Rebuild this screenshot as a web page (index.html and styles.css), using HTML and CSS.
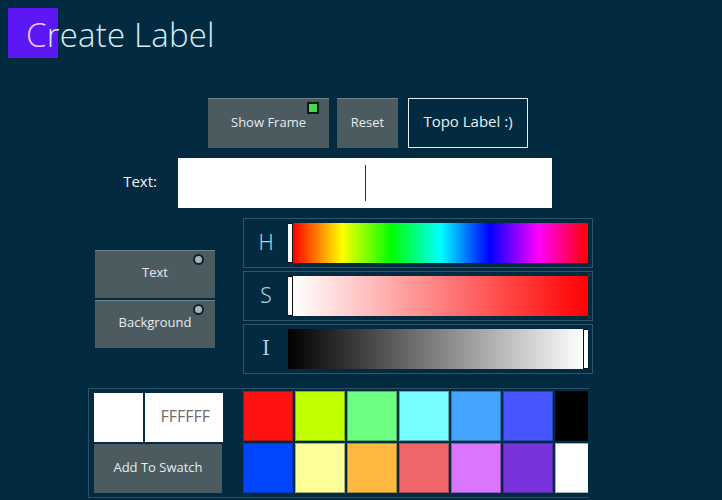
FILE: index.html
```html
<!DOCTYPE html>
<html>
<head>
<meta charset="utf-8">
<link rel="stylesheet" href="styles.css">
</head>
<body>
<div class="page">
  <header class="header">
    <div class="accent"></div>
    <h1 class="title"><span class="first">C</span>reate Label</h1>
  </header>

  <div class="toolbar">
    <button class="btn btn-frame">Show Frame<span class="led"></span></button>
    <button class="btn btn-reset">Reset</button>
    <div class="preview">Topo Label :)</div>
  </div>

  <div class="text-row">
    <label class="text-label">Text:</label>
    <div class="text-input"><span class="caret"></span></div>
  </div>

  <div class="color-area">
    <div class="targets">
      <button class="btn target">Text<span class="radio"></span></button>
      <button class="btn target">Background<span class="radio"></span></button>
    </div>
    <div class="sliders">
      <div class="slider">
        <span class="ch">H</span>
        <span class="thumb"></span>
        <div class="track hue"></div>
      </div>
      <div class="slider">
        <span class="ch">S</span>
        <span class="thumb"></span>
        <div class="track sat"></div>
      </div>
      <div class="slider">
        <span class="ch ch-i">I</span>
        <div class="track int"></div>
        <span class="thumb thumb-end"></span>
      </div>
    </div>
  </div>

  <div class="swatch-panel">
    <div class="current">
      <div class="current-top">
        <div class="current-chip"></div>
        <div class="hex">FFFFFF</div>
      </div>
      <button class="btn add">Add To Swatch</button>
    </div>
    <div class="swatches">
      <div class="sw" style="background:#ff1212"></div>
      <div class="sw" style="background:#c0ff00"></div>
      <div class="sw" style="background:#6cff82"></div>
      <div class="sw" style="background:#77ffff"></div>
      <div class="sw" style="background:#44a4ff"></div>
      <div class="sw" style="background:#4555ff"></div>
      <div class="sw" style="background:#000000"></div>
      <div class="sw" style="background:#0045ff"></div>
      <div class="sw" style="background:#ffff99"></div>
      <div class="sw" style="background:#ffb840"></div>
      <div class="sw" style="background:#ee6668"></div>
      <div class="sw" style="background:#dd74ff"></div>
      <div class="sw" style="background:#7833dd"></div>
      <div class="sw" style="background:#ffffff"></div>
    </div>
  </div>
</div>
</body>
</html>
```

FILE: styles.css
```css
* { box-sizing: border-box; }
html, body {
  margin: 0;
  padding: 0;
  background: #022b41;
  width: 722px;
  height: 500px;
  overflow: hidden;
  font-family: "Open Sans", "Noto Sans", sans-serif;
  color: #e4ecef;
}
.page {
  position: relative;
  width: 722px;
  height: 500px;
}
.header {
  position: relative;
  height: 98px;
}
.accent {
  position: absolute;
  left: 8px;
  top: 8px;
  width: 50px;
  height: 50px;
  background: #5b18f4;
}
.title {
  position: relative;
  margin: 0;
  padding: 10px 0 0 26px;
  font-weight: 300;
  font-size: 33px;
  line-height: 50px;
  color: #d8ecf4;
  letter-spacing: 0.2px;
}
.first { color: #eec8ff; }

.btn {
  position: relative;
  border: none;
  border-top: 1px solid #6f8388;
  background: #4b5b60;
  color: #e4ecef;
  font-family: "Open Sans", "Noto Sans", sans-serif;
  font-size: 13px;
  padding: 0 0 4px 0;
  margin: 0;
}
.toolbar {
  display: flex;
  height: 50px;
  margin-left: 208px;
}
.btn-frame { width: 121px; height: 50px; }
.btn-reset { width: 61px; height: 50px; margin-left: 8px; }
.led {
  position: absolute;
  right: 10px;
  top: 3px;
  width: 12px;
  height: 12px;
  background: #4ed64e;
  border: 2px solid #0b1a16;
}
.preview {
  margin-left: 10px;
  width: 120px;
  height: 50px;
  border: 1px solid #e8f0f2;
  display: flex;
  align-items: center;
  justify-content: center;
  font-size: 15px;
  color: #e8f0f2;
  padding-bottom: 4px;
}

.text-row {
  display: flex;
  align-items: center;
  margin-top: 10px;
  height: 50px;
}
.text-label {
  width: 157px;
  text-align: right;
  font-size: 15px;
  color: #eef3f5;
  padding-bottom: 4px;
}
.text-input {
  margin-left: 21px;
  width: 374px;
  height: 50px;
  background: #ffffff;
  display: flex;
  align-items: center;
  padding-left: 187px;
}
.caret {
  width: 1px;
  height: 36px;
  background: #333;
}

.color-area {
  display: flex;
  align-items: center;
  margin-top: 10px;
}
.targets {
  margin-left: 95px;
  width: 120px;
  display: flex;
  flex-direction: column;
  gap: 2px;
  margin-top: 5px;
}
.target {
  width: 120px;
  height: 48px;
  font-size: 13px;
}
.radio {
  position: absolute;
  right: 11px;
  top: 3px;
  width: 11px;
  height: 11px;
  border-radius: 50%;
  border: 2px solid #0c2430;
  background: #a9b4b8;
}
.sliders {
  margin-left: 28px;
  display: flex;
  flex-direction: column;
  gap: 3px;
}
.slider {
  width: 350px;
  height: 50px;
  border: 1px solid #2d566a;
  display: flex;
  align-items: center;
  padding: 4px 4px 4px 0;
}
.ch {
  width: 44px;
  text-align: center;
  font-size: 21px;
  font-weight: 300;
  color: #b2d2de;
  font-family: "Noto Sans", "Open Sans", sans-serif;
  padding-bottom: 2px;
}
.ch-i { font-family: "DejaVu Serif", serif; font-size: 20px; }
.thumb {
  width: 5px;
  height: 40px;
  background: #ffffff;
  border: 1px solid #111;
  border-left-width: 0;
}
.thumb-end { border-left-width: 1px; border-right-width: 0; width: 5px; }
.track {
  flex: 1;
  height: 40px;
}
.hue {
  background: linear-gradient(to right, #ff0000 0%, #ffff00 16.6%, #00ff00 33.3%, #00ffff 50%, #0000ff 66.6%, #ff00ff 83.3%, #ff0000 100%);
}
.sat {
  background: linear-gradient(to right, #ffffff, #ff0000);
}
.int {
  background: linear-gradient(to right, #000000, #ffffff);
}

.swatch-panel {
  margin-top: 14px;
  margin-left: 88px;
  width: 501px;
  height: 110px;
  border: 1px solid #2a5266;
  border-right: none;
  display: flex;
  padding: 2px 0 0 5px;
}
.current {
  width: 129px;
  padding-top: 2px;
  display: flex;
  flex-direction: column;
  gap: 2px;
}
.current-top {
  display: flex;
  gap: 2px;
  height: 49px;
}
.current-chip {
  width: 49px;
  background: #ffffff;
}
.hex {
  width: 78px;
  background: #ffffff;
  color: #6c6c6c;
  font-size: 16px;
  display: flex;
  align-items: center;
  justify-content: flex-end;
  padding: 0 13px 3px 0;
}
.add {
  width: 128px;
  height: 49px;
  border-top: none;
  font-size: 13px;
}
.swatches {
  margin-left: 20px;
  width: 345px;
  overflow: hidden;
  display: grid;
  grid-template-columns: repeat(7, 50px);
  grid-template-rows: 50px 50px;
  gap: 2px;
}
.sw {
  border: 1px solid rgba(0, 30, 50, 0.35);
}
```
